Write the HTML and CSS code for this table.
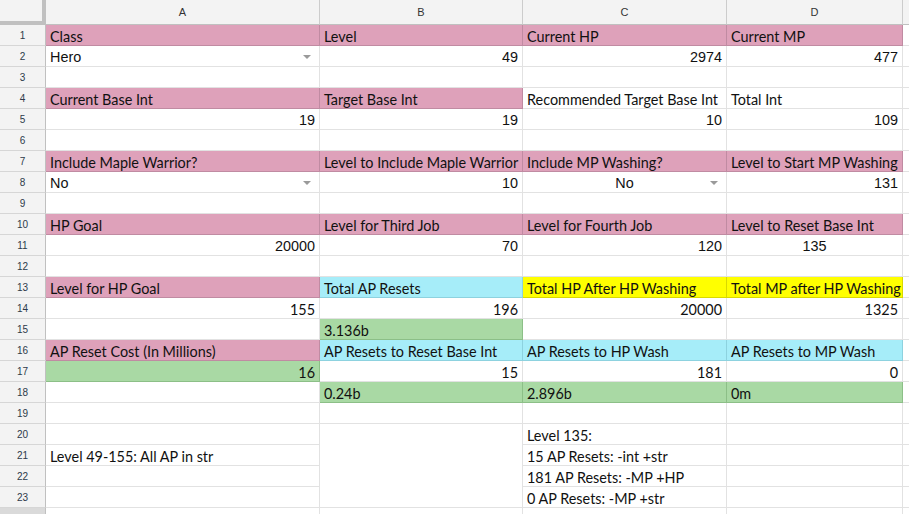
FILE: index.html
```html
<!DOCTYPE html>
<html lang="en">
<head>
    <meta charset="UTF-8">
    <meta name="viewport" content="width=device-width, initial-scale=1.0">
    <title>AP Reset Calculator</title>
    <link rel="stylesheet" href="styles.css">
</head>
<body>
    <div class="sheet">
        <!-- cabeçalho das colunas -->
        <div class="corner"></div>
        <div class="ch">A</div>
        <div class="ch">B</div>
        <div class="ch">C</div>
        <div class="ch">D</div>
        <div class="ch"></div>

        <div class="rh">1</div>
        <div class="cell pink">Class</div>
        <div class="cell pink">Level</div>
        <div class="cell pink">Current HP</div>
        <div class="cell pink">Current MP</div>
        <div class="cell"></div>

        <div class="rh">2</div>
        <div class="cell arial dd">Hero</div>
        <div class="cell arial num">49</div>
        <div class="cell arial num">2974</div>
        <div class="cell arial num">477</div>
        <div class="cell"></div>

        <div class="rh">3</div>
        <div class="cell"></div>
        <div class="cell"></div>
        <div class="cell"></div>
        <div class="cell"></div>
        <div class="cell"></div>

        <div class="rh">4</div>
        <div class="cell pink">Current Base Int</div>
        <div class="cell pink">Target Base Int</div>
        <div class="cell">Recommended Target Base Int</div>
        <div class="cell">Total Int</div>
        <div class="cell"></div>

        <div class="rh">5</div>
        <div class="cell arial num">19</div>
        <div class="cell arial num">19</div>
        <div class="cell arial num">10</div>
        <div class="cell arial num">109</div>
        <div class="cell"></div>

        <div class="rh">6</div>
        <div class="cell"></div>
        <div class="cell"></div>
        <div class="cell"></div>
        <div class="cell"></div>
        <div class="cell"></div>

        <div class="rh">7</div>
        <div class="cell pink">Include Maple Warrior?</div>
        <div class="cell pink">Level to Include Maple Warrior</div>
        <div class="cell pink">Include MP Washing?</div>
        <div class="cell pink">Level to Start MP Washing</div>
        <div class="cell"></div>

        <div class="rh">8</div>
        <div class="cell arial dd">No</div>
        <div class="cell arial num">10</div>
        <div class="cell arial dd center">No</div>
        <div class="cell arial num">131</div>
        <div class="cell"></div>

        <div class="rh">9</div>
        <div class="cell"></div>
        <div class="cell"></div>
        <div class="cell"></div>
        <div class="cell"></div>
        <div class="cell"></div>

        <div class="rh">10</div>
        <div class="cell pink">HP Goal</div>
        <div class="cell pink">Level for Third Job</div>
        <div class="cell pink">Level for Fourth Job</div>
        <div class="cell pink">Level to Reset Base Int</div>
        <div class="cell"></div>

        <div class="rh">11</div>
        <div class="cell arial num">20000</div>
        <div class="cell arial num">70</div>
        <div class="cell arial num">120</div>
        <div class="cell arial center">135</div>
        <div class="cell"></div>

        <div class="rh">12</div>
        <div class="cell"></div>
        <div class="cell"></div>
        <div class="cell"></div>
        <div class="cell"></div>
        <div class="cell"></div>

        <div class="rh">13</div>
        <div class="cell pink">Level for HP Goal</div>
        <div class="cell blue">Total AP Resets</div>
        <div class="cell yellow">Total HP After HP Washing</div>
        <div class="cell yellow">Total MP after HP Washing</div>
        <div class="cell"></div>

        <div class="rh">14</div>
        <div class="cell num">155</div>
        <div class="cell num">196</div>
        <div class="cell num">20000</div>
        <div class="cell num">1325</div>
        <div class="cell"></div>

        <div class="rh">15</div>
        <div class="cell"></div>
        <div class="cell green">3.136b</div>
        <div class="cell"></div>
        <div class="cell"></div>
        <div class="cell"></div>

        <div class="rh">16</div>
        <div class="cell pink">AP Reset Cost (In Millions)</div>
        <div class="cell blue">AP Resets to Reset Base Int</div>
        <div class="cell blue">AP Resets to HP Wash</div>
        <div class="cell blue">AP Resets to MP Wash</div>
        <div class="cell"></div>

        <div class="rh">17</div>
        <div class="cell green num">16</div>
        <div class="cell num">15</div>
        <div class="cell num">181</div>
        <div class="cell num">0</div>
        <div class="cell"></div>

        <div class="rh">18</div>
        <div class="cell"></div>
        <div class="cell green">0.24b</div>
        <div class="cell green">2.896b</div>
        <div class="cell green">0m</div>
        <div class="cell"></div>

        <div class="rh">19</div>
        <div class="cell"></div>
        <div class="cell"></div>
        <div class="cell"></div>
        <div class="cell"></div>
        <div class="cell"></div>

        <div class="rh">20</div>
        <div class="cell"></div>
        <div class="cell merged"></div>
        <div class="cell">Level 135:</div>
        <div class="cell"></div>
        <div class="cell"></div>

        <div class="rh">21</div>
        <div class="cell">Level 49-155: All AP in str</div>
        <div class="cell">15 AP Resets: -int +str</div>
        <div class="cell"></div>
        <div class="cell"></div>

        <div class="rh">22</div>
        <div class="cell"></div>
        <div class="cell">181 AP Resets: -MP +HP</div>
        <div class="cell"></div>
        <div class="cell"></div>

        <div class="rh">23</div>
        <div class="cell"></div>
        <div class="cell">0 AP Resets: -MP +str</div>
        <div class="cell"></div>
        <div class="cell"></div>

        <div class="rh last"></div>
        <div class="cell"></div>
        <div class="cell"></div>
        <div class="cell"></div>
        <div class="cell"></div>
        <div class="cell"></div>
    </div>
</body>
</html>
```

FILE: styles.css
```css
body {
    margin: 0;
    background-color: white;
    overflow: hidden;
    font-family: Lato, 'Noto Sans', sans-serif;
}
.sheet {
    display: grid;
    grid-template-columns: 46px 274px 203px 204px 176px 1fr;
    grid-template-rows: 25px;
    grid-auto-rows: 21px;
    width: 909px;
}
.corner {
    background-color: #f3f3f3;
    border-right: 4px solid #c0c0c0;
    border-bottom: 4px solid #c0c0c0;
}
.ch {
    background-color: #f3f3f3;
    border-right: 1px solid #cccccc;
    border-bottom: 1px solid #c0c0c0;
    display: flex;
    justify-content: center;
    align-items: center;
    font-family: 'Liberation Sans', Arial, sans-serif;
    font-size: 11px;
    color: #333;
}
.rh {
    background-color: #f3f3f3;
    border-right: 1px solid #c0c0c0;
    border-bottom: 1px solid #d6d6d6;
    display: flex;
    justify-content: center;
    align-items: center;
    padding-top: 1px;
    font-family: 'Liberation Sans', Arial, sans-serif;
    font-size: 10px;
    color: #2d3a4a;
}
.rh.last {
    background-color: #dadada;
}
.cell {
    box-sizing: border-box;
    border-right: 1px solid #e2e2e2;
    border-bottom: 1px solid #e2e2e2;
    padding: 0 4px;
    font-size: 14.4px;
    line-height: 23px;
    color: #111;
    white-space: nowrap;
    overflow: hidden;
    position: relative;
}
.arial {
    font-family: 'Liberation Sans', Arial, sans-serif;
    font-size: 14.4px;
}
.num {
    text-align: right;
}
.center {
    text-align: center;
}
.merged {
    grid-row: span 4;
}
.dd::after {
    content: '';
    position: absolute;
    right: 8px;
    top: 9px;
    border-left: 4px solid transparent;
    border-right: 4px solid transparent;
    border-top: 4px solid #9a9a9a;
}
.pink {
    background-color: #dea1ba;
    border-color: #c08ba2;
}
.blue {
    background-color: #a6edf9;
    border-color: #8dd2df;
}
.yellow {
    background-color: #ffff00;
    border-color: #d9d900;
}
.green {
    background-color: #a9d9a4;
    border-color: #8cbf87;
}
```
